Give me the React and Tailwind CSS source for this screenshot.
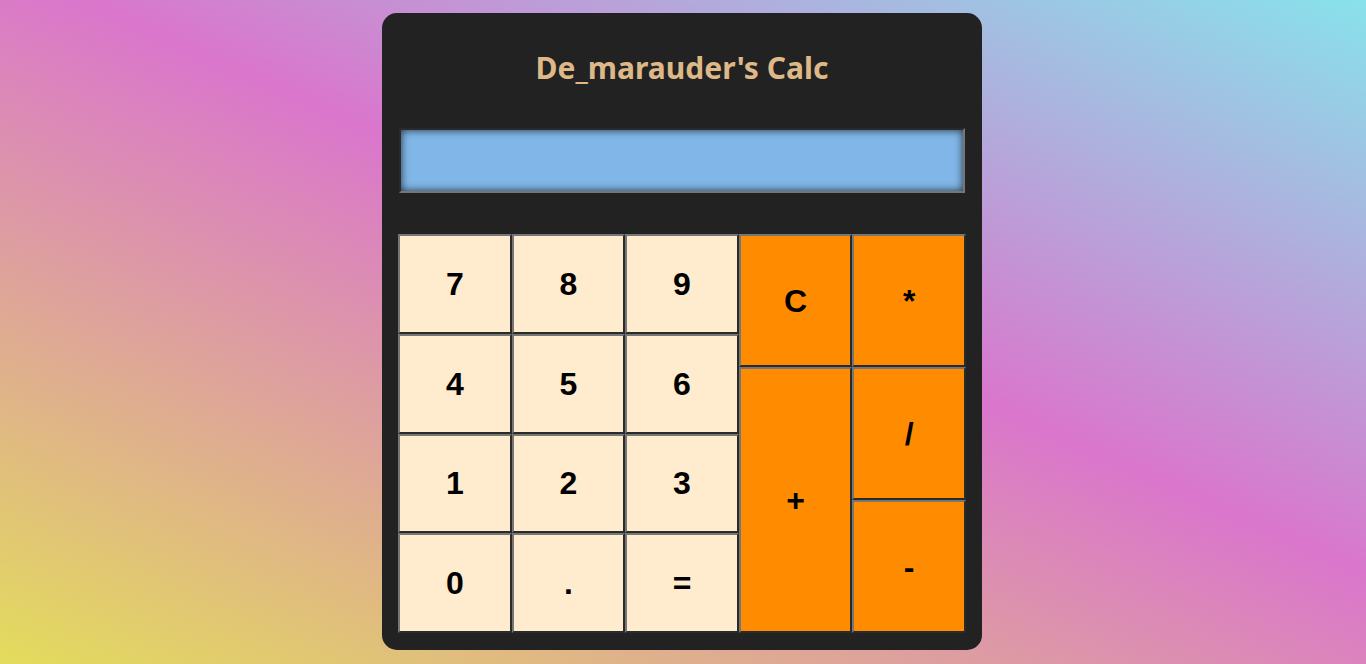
import React, { useState } from "react";

const keys = [
  { label: "7", pos: "col-start-1 row-start-1 row-span-3", op: false },
  { label: "8", pos: "col-start-2 row-start-1 row-span-3", op: false },
  { label: "9", pos: "col-start-3 row-start-1 row-span-3", op: false },
  { label: "4", pos: "col-start-1 row-start-4 row-span-3", op: false },
  { label: "5", pos: "col-start-2 row-start-4 row-span-3", op: false },
  { label: "6", pos: "col-start-3 row-start-4 row-span-3", op: false },
  { label: "1", pos: "col-start-1 row-start-7 row-span-3", op: false },
  { label: "2", pos: "col-start-2 row-start-7 row-span-3", op: false },
  { label: "3", pos: "col-start-3 row-start-7 row-span-3", op: false },
  { label: "0", pos: "col-start-1 row-start-10 row-span-3", op: false },
  { label: ".", pos: "col-start-2 row-start-10 row-span-3", op: false },
  { label: "=", pos: "col-start-3 row-start-10 row-span-3", op: false },
  { label: "C", pos: "col-start-4 row-start-1 row-span-4", op: true },
  { label: "*", pos: "col-start-5 row-start-1 row-span-4", op: true },
  { label: "+", pos: "col-start-4 row-start-5 row-span-8", op: true },
  { label: "/", pos: "col-start-5 row-start-5 row-span-4", op: true },
  { label: "-", pos: "col-start-5 row-start-9 row-span-4", op: true },
];

const App = () => {

  const [display, setDisplay] = useState("");

  const press = (k) => {
    if (k === "C") return setDisplay("");
    if (k === "=") {
      try {
        // eslint-disable-next-line no-new-func
        setDisplay(String(Function(`return (${display})`)()));
      } catch (e) {
        setDisplay("Error");
      }
      return;
    }
    setDisplay(display + k);
  };

  return (

    <div className="w-full h-[664px] overflow-hidden bg-[linear-gradient(24deg,#e3dc5c_0%,#da76cc_55%,#88e2ec_100%)] flex justify-center pt-[13px] pr-[2px]">

      <div className="w-[600px] h-[637px] bg-[#222222] rounded-[15px] px-4 flex flex-col">

        {/* TITLE */}

        <div className="h-[115px] pt-[35px] flex justify-center">
          <h1 className="text-[30px] leading-[40px] font-bold text-[#deb887] font-['Noto_Sans',sans-serif]">
            De_marauder's Calc
          </h1>
        </div>

        {/* DISPLAY */}

        <input
          value={display}
          readOnly
          className="h-[65px] ml-px mr-px bg-[#80b7e8] border-2 border-t-[#2a2a2a] border-l-[#2a2a2a] border-r-[#767676] border-b-[#767676] shadow-[inset_0_0_9px_rgba(0,0,0,0.75)] px-3 text-right text-[28px] font-['Liberation_Sans',sans-serif] outline-none"
        />

        {/* KEYS */}

        <div className="mt-[41px] h-[399px] grid grid-cols-5 grid-rows-12">

          {keys.map((k) => (
            <button
              key={k.label}
              onClick={() => press(k.label)}
              className={`${k.pos} ${k.op ? "bg-[#ff8c00]" : "bg-[#ffebcd]"} border-2 border-t-[#767676] border-l-[#767676] border-r-[#2a2a2a] border-b-[#2a2a2a] text-black font-bold text-[32px] font-['Liberation_Sans',sans-serif] flex items-center justify-center`}
            >
              {k.label}
            </button>
          ))}

        </div>

      </div>

    </div>

  );

};

export default App;
